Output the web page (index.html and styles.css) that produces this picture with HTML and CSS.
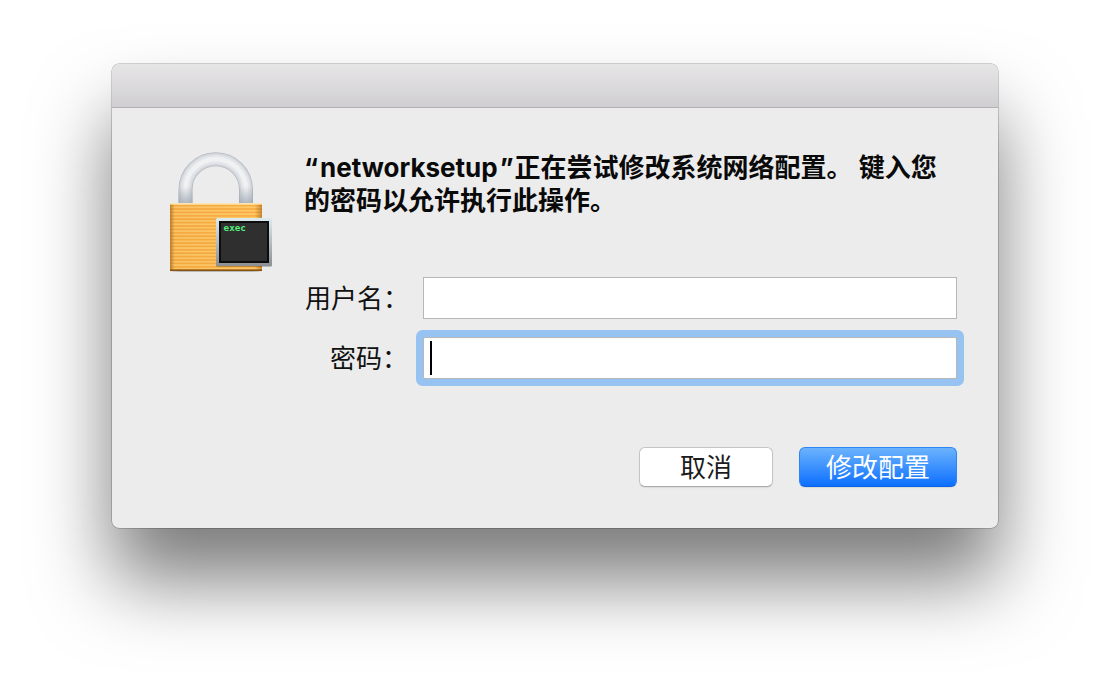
FILE: index.html
```html
<!DOCTYPE html>
<html lang="zh-CN">
<head>
<meta charset="utf-8">
<title>networksetup</title>
<link rel="stylesheet" href="styles.css">
</head>
<body>
<div class="window">
  <div class="titlebar"></div>
  <div class="content">
    <svg class="lock" width="105" height="120" viewBox="0 0 105 120">
      <defs>
        <pattern id="stripes" width="4" height="3.4" patternUnits="userSpaceOnUse">
          <rect width="4" height="3.4" fill="#ffc867"/>
          <rect y="1.9" width="4" height="1.5" fill="#f6a93f"/>
        </pattern>
        <linearGradient id="shade" x1="0" y1="0" x2="1" y2="0">
          <stop offset="0" stop-color="#8f5208" stop-opacity="0.6"/>
          <stop offset="0.05" stop-color="#8f5208" stop-opacity="0.05"/>
          <stop offset="0.92" stop-color="#8f5208" stop-opacity="0"/>
          <stop offset="1" stop-color="#8f5208" stop-opacity="0.5"/>
        </linearGradient>
        <linearGradient id="frame" x1="0" y1="0" x2="0" y2="1">
          <stop offset="0" stop-color="#dcebf0"/>
          <stop offset="1" stop-color="#8c8f92"/>
        </linearGradient>
        <linearGradient id="legs" x1="0" y1="0" x2="0" y2="1">
          <stop offset="0" stop-color="#98a1ad" stop-opacity="0"/>
          <stop offset="1" stop-color="#98a1ad" stop-opacity="0.75"/>
        </linearGradient>
      </defs>
      <g fill="none">
        <path d="M17.5 53V37.5a30.25 30.25 0 0 1 60.5 0V53" stroke="#b4b9c0" stroke-width="14"/>
        <path d="M17.5 53V37.5a30.25 30.25 0 0 1 60.5 0V53" stroke="#d3d7dc" stroke-width="12.4"/>
        <path d="M17.5 53V37.5a30.25 30.25 0 0 1 60.5 0V53" stroke="#e3e6e9" stroke-width="9"/>
        <path d="M17.5 53V37.5a30.25 30.25 0 0 1 60.5 0V53" stroke="#f0f1f3" stroke-width="4.5"/>
      </g>
      <rect x="10.5" y="34" width="14" height="18" fill="url(#legs)"/>
      <rect x="71" y="34" width="14" height="18" fill="url(#legs)"/>
      <ellipse cx="48" cy="119" rx="46" ry="1.6" fill="#000" opacity="0.22"/>
      <rect x="2" y="51" width="92" height="68" rx="1.5" fill="url(#stripes)"/>
      <rect x="2" y="51" width="92" height="68" rx="1.5" fill="url(#shade)"/>
      <rect x="2" y="51" width="92" height="1.6" fill="#fde6b4"/>
      <rect x="2" y="117.4" width="92" height="1.6" fill="#8a5510"/>
      <rect x="48" y="67" width="56" height="48" rx="1.5" fill="#000" opacity="0.22"/>
      <rect x="48" y="66" width="56" height="48" rx="1.5" fill="url(#frame)"/>
      <rect x="51" y="69" width="50" height="42" fill="#0d0d0d"/>
      <rect x="53" y="71" width="46" height="38" fill="#2f2f2f"/>
      <text class="exec" x="55.6" y="78.7">exec</text>
    </svg>
    <div class="main">
      <h1 class="heading"><span class="quote-open">“</span><span>networksetup</span><span class="quote-close">”</span><span>正在尝试修改系统网络配置。 键入您</span><span class="heading-line">的密码以允许执行此操作。</span></h1>
      <div class="form">
        <div class="label">用户名：</div>
        <div class="field"></div>
        <div class="label">密码：</div>
        <div class="field focused"><span class="caret"></span></div>
      </div>
      <div class="actions">
        <button class="btn">取消</button>
        <button class="btn primary">修改配置</button>
      </div>
    </div>
  </div>
</div>
</body>
</html>
```
FILE: styles.css
```css
html, body {
  margin: 0;
  padding: 0;
  background: #fff;
}
body {
  width: 1110px;
  height: 688px;
  overflow: hidden;
  box-sizing: border-box;
  padding: 64px 112px;
  font-family: Inter, "Noto Sans CJK SC", sans-serif;
  color: #111;
}
.window {
  width: 886px;
  height: 464px;
  background: #ececec;
  border-radius: 7px;
  box-shadow: 0 0 0 0.5px rgba(0, 0, 0, 0.35), 0 52px 78px rgba(0, 0, 0, 0.52);
  display: flex;
  flex-direction: column;
}
.titlebar {
  height: 43px;
  flex: none;
  border-radius: 7px 7px 0 0;
  background: linear-gradient(#e7e6e7, #d0ced1);
  border-bottom: 1px solid #b2b1b3;
}
.content {
  display: flex;
  padding: 43px 41px 0 56px;
}
.lock {
  flex: none;
  display: block;
  margin-top: 1px;
}
.exec {
  font-family: "DejaVu Sans Mono", monospace;
  font-size: 9.2px;
  font-weight: 700;
  fill: #58f07f;
}
.main {
  margin-left: 32px;
  flex: 1;
  min-width: 0;
}
.heading {
  margin: 0 0 0 -1px;
  font-size: 26px;
  line-height: 33px;
  font-weight: 700;
  color: #0a0a0a;
  width: 640px;
}
.heading-line {
  display: block;
}
.quote-open {
  margin-right: 2px;
}
.quote-close {
  margin: 0 1px 0 2px;
}
.form {
  margin-top: 60px;
  display: grid;
  grid-template-columns: 92px 534px;
  column-gap: 26px;
  row-gap: 18px;
  align-items: center;
}
.label {
  font-size: 26px;
  height: 42px;
  line-height: 44px;
  text-align: right;
  white-space: nowrap;
  margin-right: -11px;
}
.field {
  box-sizing: border-box;
  height: 42px;
  background: #fff;
  border: 1px solid #b7b7b7;
  display: flex;
  align-items: center;
  padding-left: 6px;
}
.field.focused {
  border-radius: 2px;
  box-shadow: 0 0 0 7px #97c3f3;
}
.caret {
  width: 2px;
  height: 34px;
  background: #000;
}
.actions {
  margin-top: 68px;
  display: flex;
  justify-content: flex-end;
  gap: 26px;
}
.btn {
  height: 40px;
  width: 134px;
  padding: 2px 0 0;
  font-family: inherit;
  font-size: 26px;
  line-height: 36px;
  color: #1c1c1c;
  background: #fff;
  border: 1px solid #c4c4c4;
  border-bottom-color: #acacac;
  border-radius: 6px;
  box-shadow: 0 1px 1px rgba(0, 0, 0, 0.08);
}
.btn.primary {
  width: 158px;
  color: #fff;
  background: linear-gradient(#6cb3fd, #0d6fff);
  border: 1px solid #2d86f5;
  border-bottom-color: #0a62e6;
}
```
